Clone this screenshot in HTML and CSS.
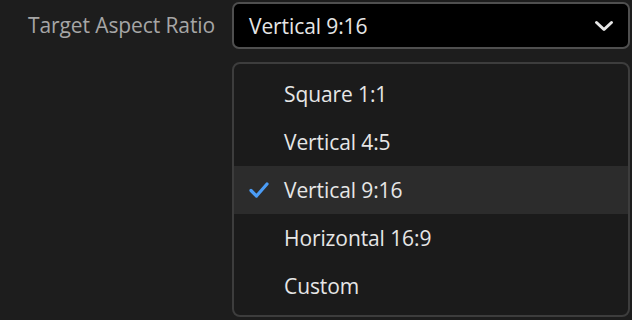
FILE: index.html
```html
<!DOCTYPE html>
<html>
<head>
<meta charset="utf-8">
<link rel="stylesheet" href="styles.css">
</head>
<body>
<div class="field">
  <div class="label">Target Aspect Ratio</div>
  <div class="control">
    <div class="select">
      <span class="value">Vertical 9:16</span>
      <svg class="chevron" width="20" height="14" viewBox="0 0 20 14"><path d="M2.5 3.5 L10 10.5 L17.5 3.5" fill="none" stroke="#e6e6e6" stroke-width="3" stroke-linecap="round" stroke-linejoin="round"/></svg>
    </div>
    <ul class="menu">
      <li class="item"><span class="check"></span>Square 1:1</li>
      <li class="item"><span class="check"></span>Vertical 4:5</li>
      <li class="item selected"><span class="check"><svg width="22" height="18" viewBox="0 0 22 18"><path d="M3 9.5 L8.5 15 L19 3" fill="none" stroke="#4b9cf5" stroke-width="3.2" stroke-linecap="round" stroke-linejoin="round"/></svg></span>Vertical 9:16</li>
      <li class="item"><span class="check"></span>Horizontal 16:9</li>
      <li class="item"><span class="check"></span>Custom</li>
    </ul>
  </div>
</div>
</body>
</html>
```
FILE: styles.css
```css
html, body {
  margin: 0;
  padding: 0;
  background: #1d1d1d;
  height: 100%;
  overflow: hidden;
}
body {
  font-family: "Open Sans", "Lato", sans-serif;
  font-size: 21px;
  letter-spacing: -0.1px;
}
.field {
  display: grid;
  grid-template-columns: 232px 398px;
  padding-top: 2px;
}
.label {
  color: #a6a6a6;
  text-align: right;
  padding-right: 17px;
  line-height: 47px;
}
.select {
  box-sizing: border-box;
  height: 47px;
  border: 2px solid #4f4f4f;
  border-radius: 7px;
  background: #000;
  display: flex;
  align-items: center;
  justify-content: space-between;
  padding: 0 14px 0 15px;
}
.value {
  color: #e6e6e6;
}
.chevron {
  display: block;
}
.menu {
  list-style: none;
  margin: 13px 0 0;
  padding: 6px 0 6px;
  box-sizing: border-box;
  height: 255px;
  border: 2px solid #3d3d3d;
  border-radius: 8px;
  background: #1b1b1b;
}
.item {
  height: 48px;
  display: flex;
  align-items: center;
  color: #e6e6e6;
}
.item.selected {
  background: #2c2c2c;
}
.check {
  width: 50px;
  padding-left: 14px;
  box-sizing: border-box;
  display: flex;
  align-items: center;
}
.check svg {
  display: block;
}
```
